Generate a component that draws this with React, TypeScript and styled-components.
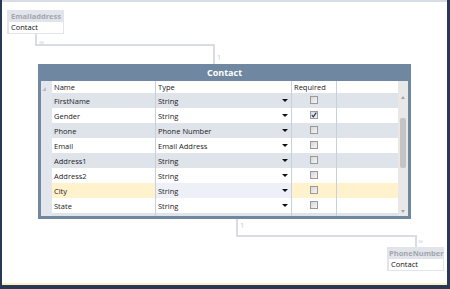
import React from 'react'
import styled, { createGlobalStyle } from 'styled-components'

const GlobalStyle = createGlobalStyle`
  html, body {
    margin: 0;
    padding: 0;
    background: #293955;
  }
  body {
    width: 450px;
    height: 289px;
    overflow: hidden;
    font-family: 'Open Sans', 'Noto Sans', sans-serif;
  }
`

type Tone = 'grey' | 'white' | 'yellow'

interface Field {
  name: string
  type: string
  required: boolean
  tone: Tone
  focused?: boolean
}

const FIELDS: Field[] = [
  { name: 'FirstName', type: 'String', required: false, tone: 'grey' },
  { name: 'Gender', type: 'String', required: true, tone: 'white' },
  { name: 'Phone', type: 'Phone Number', required: false, tone: 'grey' },
  { name: 'Email', type: 'Email Address', required: false, tone: 'white' },
  { name: 'Address1', type: 'String', required: false, tone: 'grey' },
  { name: 'Address2', type: 'String', required: false, tone: 'white' },
  { name: 'City', type: 'String', required: false, tone: 'yellow', focused: true },
  { name: 'State', type: 'String', required: false, tone: 'white' }
]

const TONES: Record<Tone, string> = {
  grey: '#dfe3ea',
  white: '#ffffff',
  yellow: '#fff2cc'
}

const LINE = '#d9dce5'

const Screen = styled.div`
  width: 450px;
  height: 289px;
  padding: 0 3px 4px 2px;
  box-sizing: border-box;
  background: #293955;
`

const Canvas = styled.div`
  position: relative;
  width: 445px;
  height: 285px;
  box-sizing: border-box;
  background: #fff;
  border-top: 2px solid #d7dce6;
  border-bottom: 2px solid #fbf1c1;
  overflow: hidden;
`

const Connectors = styled.svg`
  position: absolute;
  left: 0;
  top: 0;
  width: 445px;
  height: 281px;
`

const Multiplicity = styled.span<{ $x: number; $y: number }>`
  position: absolute;
  left: ${(p) => p.$x - 2}px;
  top: ${(p) => p.$y - 2}px;
  font-size: 7px;
  line-height: 8px;
  color: #c4c8d2;
`

const EntityBox = styled.div<{ $x: number; $y: number }>`
  position: absolute;
  left: ${(p) => p.$x - 2}px;
  top: ${(p) => p.$y - 2}px;
  width: 57px;
  display: flex;
  flex-direction: column;
  padding: 0 1px 1px 2px;
  box-sizing: border-box;
  background: #e1e4ea;
`

const EntityTitle = styled.div`
  height: 12px;
  line-height: 12px;
  text-align: center;
  font-size: 7.5px;
  font-weight: 700;
  color: #a2a6af;
`

const EntityBody = styled.div`
  height: 11px;
  line-height: 11px;
  padding-left: 2px;
  background: #fff;
  font-size: 7.5px;
  color: #111;
`

const Table = styled.div`
  position: absolute;
  left: 36px;
  top: 62px;
  width: 373px;
  height: 155px;
  display: flex;
  flex-direction: column;
  padding: 0 3px 3px 3px;
  box-sizing: border-box;
  background: #7087a2;
`

const TitleBar = styled.div`
  height: 17px;
  line-height: 17px;
  text-align: center;
  font-size: 9px;
  font-weight: 700;
  color: #fff;
`

const GridArea = styled.div`
  flex: 1;
  display: flex;
  background: #fff;
  overflow: hidden;
`

const Grid = styled.div`
  width: 357px;
  display: flex;
  flex-direction: column;
`

const Row = styled.div<{ $header?: boolean }>`
  display: grid;
  grid-template-columns: 11px 104px 136px 45px 61px;
  height: ${(p) => (p.$header ? 12 : 15)}px;
  flex-shrink: 0;
`

const RowHead = styled.div`
  position: relative;
  background: #e3e6ec;
`

const Corner = styled.svg`
  position: absolute;
  left: 1px;
  bottom: 2px;
  width: 4px;
  height: 4px;
`

const Cell = styled.div<{ $bg: string; $line?: boolean }>`
  display: flex;
  align-items: center;
  padding-left: 2px;
  box-sizing: border-box;
  background: ${(p) => p.$bg};
  border-right: ${(p) => (p.$line ? '1px solid #c7d0dd' : 'none')};
  font-size: 7.5px;
  color: #222;
  white-space: nowrap;
`

const TypeCell = styled(Cell)`
  justify-content: space-between;
  padding-right: 3px;
`

const CheckCell = styled(Cell)`
  justify-content: center;
  align-items: flex-start;
  padding: 3px 0 0;
`

const Arrow = styled.span`
  width: 0;
  height: 0;
  border-left: 3px solid transparent;
  border-right: 3px solid transparent;
  border-top: 3px solid #111;
`

const CheckBox = styled.span`
  width: 8px;
  height: 8px;
  box-sizing: border-box;
  border: 1px solid #9a9a9a;
  background: linear-gradient(135deg, #d6d6d6, #f6f6f6);
  display: flex;
  align-items: center;
  justify-content: center;
`

const ScrollBar = styled.div`
  width: 10px;
  display: flex;
  flex-direction: column;
  align-items: center;
  padding: 15px 0 3px;
  box-sizing: border-box;
  background: #e8e8e8;
`

const ScrollArrow = styled.span<{ $down?: boolean }>`
  width: 0;
  height: 0;
  flex-shrink: 0;
  border-left: 2.5px solid transparent;
  border-right: 2.5px solid transparent;
  ${(p) => (p.$down ? 'border-top: 3px solid #a4a4a4;' : 'border-bottom: 3px solid #a4a4a4;')}
`

const Thumb = styled.span`
  width: 6px;
  height: 50px;
  margin-top: 19px;
  border-radius: 2px;
  background: #c4c4c4;
`

const Spacer = styled.span`
  flex: 1;
`

const Entity = ({ x, y, title }: { x: number; y: number; title: string }) => (
  <EntityBox $x={x} $y={y}>
    <EntityTitle>{title}</EntityTitle>
    <EntityBody>Contact</EntityBody>
  </EntityBox>
)

const RequiredBox = ({ checked }: { checked: boolean }) => (
  <CheckBox>
    {checked && (
      <svg width="6" height="6" viewBox="0 0 6 6">
        <path d="M0.8 3.2 L2.4 4.8 L5.2 0.6" fill="none" stroke="#1d3473" strokeWidth="1.2" />
      </svg>
    )}
  </CheckBox>
)

const FieldRow = ({ field }: { field: Field }) => {
  const bg = TONES[field.tone]
  return (
    <Row>
      <RowHead />
      <Cell $bg={bg} $line>
        {field.name}
      </Cell>
      <TypeCell $bg={field.focused ? '#eef0f7' : bg} $line>
        {field.type}
        <Arrow />
      </TypeCell>
      <CheckCell $bg={bg} $line>
        <RequiredBox checked={field.required} />
      </CheckCell>
      <Cell $bg={bg} />
    </Row>
  )
}

// next row, scrolled mostly out of view: only its top edge shows
const PartialRow = () => (
  <Row>
    <RowHead />
    <Cell $bg={TONES.grey} $line />
    <Cell $bg={TONES.grey} $line />
    <CheckCell $bg={TONES.grey} $line>
      <RequiredBox checked={false} />
    </CheckCell>
    <Cell $bg={TONES.grey} />
  </Row>
)

const App = () => (
  <Screen>
    <GlobalStyle />
    <Canvas>
      <Connectors viewBox="2 2 445 281">
        <path d="M36 34 V45 H214 V64" fill="none" stroke={LINE} strokeWidth="2" />
        <path d="M237 219 V236 H416 V247" fill="none" stroke={LINE} strokeWidth="2" />
      </Connectors>
      <Multiplicity $x={39} $y={39}>∞</Multiplicity>
      <Multiplicity $x={217} $y={54}>1</Multiplicity>
      <Multiplicity $x={240} $y={222}>1</Multiplicity>
      <Multiplicity $x={418} $y={238}>∞</Multiplicity>

      <Entity x={7} y={10} title="Emailaddress" />
      <Entity x={387} y={247} title="PhoneNumber" />

      <Table>
        <TitleBar>Contact</TitleBar>
        <GridArea>
          <Grid>
            <Row $header>
              <RowHead>
                <Corner viewBox="0 0 4 4">
                  <path d="M4 0 V4 H0 Z" fill="#b8bcc4" />
                </Corner>
              </RowHead>
              <Cell $bg="#fff" $line>
                Name
              </Cell>
              <Cell $bg="#fff" $line>
                Type
              </Cell>
              <Cell $bg="#fff" $line>
                Required
              </Cell>
              <Cell $bg="#fff" />
            </Row>
            {FIELDS.map((field) => (
              <FieldRow key={field.name} field={field} />
            ))}
            <PartialRow />
          </Grid>
          <ScrollBar>
            <ScrollArrow />
            <Thumb />
            <Spacer />
            <ScrollArrow $down />
          </ScrollBar>
        </GridArea>
      </Table>
    </Canvas>
  </Screen>
)

export default App
